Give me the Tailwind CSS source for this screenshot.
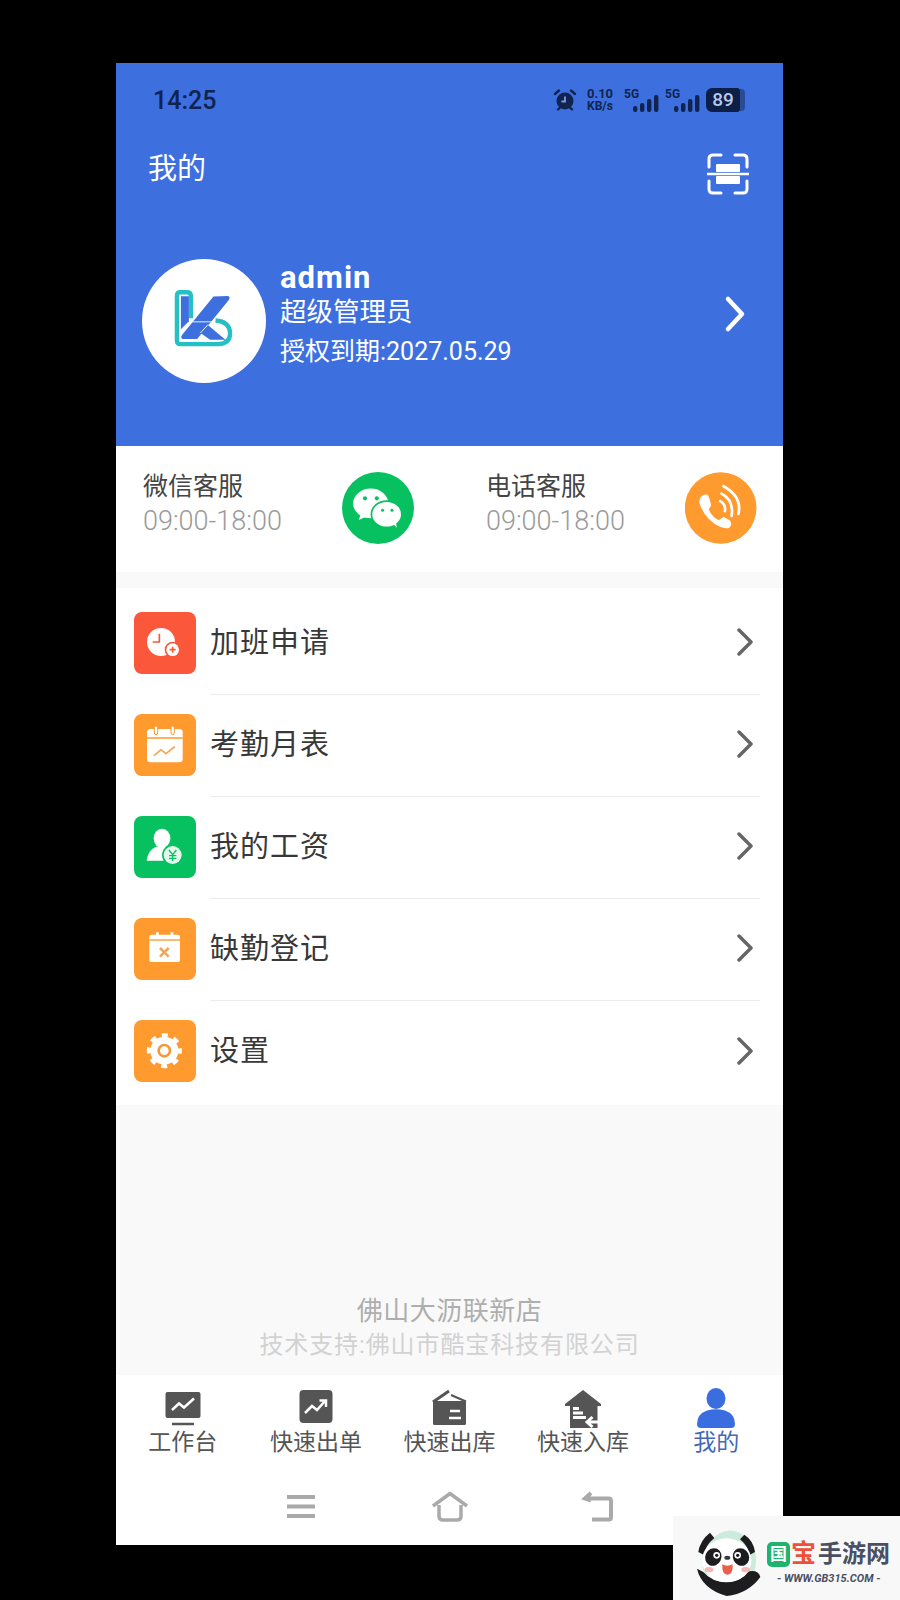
<!DOCTYPE html>
<html lang="zh-CN">
<head>
  <meta charset="UTF-8">
  <meta name="viewport" content="width=device-width, initial-scale=1.0">
  <title>我的</title>
  <script src="https://cdn.jsdelivr.net/npm/@tailwindcss/browser@4"></script>
</head>
<body class="bg-black">
  <div class="relative w-[900px] h-[1600px] overflow-hidden bg-black pt-[63px] pl-[116px] font-['Roboto','Noto_Sans_CJK_SC',sans-serif]">
    <div class="w-[667px] h-[1482px] flex flex-col bg-[#f9f9f9]">

      <!-- blue header -->
      <section class="h-[383px] bg-[#3d6fdf] shrink-0">
        <div class="h-[74px] pl-[37px] pr-[38px] flex items-center justify-between text-[#10244f]">
          <span class="text-[25px] font-medium pt-[1px]">14:25</span>
          <div class="flex items-center">
            <svg class="w-[24px] h-[24px] mr-[9px]" viewBox="0 0 24 24">
              <circle cx="12" cy="13" r="8.5" fill="#10244f"/>
              <path d="M2 6 L6 2.5 M22 6 L18 2.5 M5 21.5 L7 19.5 M19 21.5 L17 19.5" stroke="#10244f" stroke-width="2.4" stroke-linecap="round"/>
              <path d="M12 8.5 V13.5 H8.5" fill="none" stroke="#7f9be0" stroke-width="1.8"/>
            </svg>
            <div class="flex flex-col items-center font-bold text-[12px] leading-[13px] w-[28px]">
              <span class="text-[13px]">0.10</span>
              <span>KB/s</span>
            </div>
            <div class="relative w-[35px] h-[24px] ml-[10px]">
              <span class="absolute left-0 top-0 text-[12px] leading-[12px] font-bold">5G</span>
              <svg class="absolute right-0 bottom-0 w-[26px] h-[17px]" viewBox="0 0 26 17" fill="#10244f">
                <rect x="0" y="11" width="4.4" height="6" rx="2"/><rect x="7" y="8" width="4.4" height="9" rx="2"/><rect x="14" y="4" width="4.4" height="13" rx="2"/><rect x="21" y="0" width="4.4" height="17" rx="2"/>
              </svg>
            </div>
            <div class="relative w-[35px] h-[24px] ml-[6px]">
              <span class="absolute left-0 top-0 text-[12px] leading-[12px] font-bold">5G</span>
              <svg class="absolute right-0 bottom-0 w-[26px] h-[17px]" viewBox="0 0 26 17" fill="#10244f">
                <rect x="0" y="11" width="4.4" height="6" rx="2"/><rect x="7" y="8" width="4.4" height="9" rx="2"/><rect x="14" y="4" width="4.4" height="13" rx="2"/><rect x="21" y="0" width="4.4" height="17" rx="2"/>
              </svg>
            </div>
            <div class="ml-[6px] w-[34px] h-[24px] bg-[#0e1f47] rounded-l-[6px] rounded-r-[3px] flex items-center justify-center text-[#b9c8ec] text-[19px] font-medium">89</div>
            <div class="w-[5px] h-[22px] bg-[#2a4a95] rounded-r-[4px]"></div>
          </div>
        </div>

        <div class="h-[66px] pl-[32px] pr-[34px] flex items-center justify-between">
          <span class="text-[29px] text-white">我的</span>
          <svg class="w-[42px] h-[42px] mt-[7px]" viewBox="0 0 42 42" fill="none" stroke="#fff" stroke-width="3" stroke-linecap="round">
            <path d="M14 2 H6 Q2 2 2 6 V14 M28 2 H36 Q40 2 40 6 V14 M14 40 H6 Q2 40 2 36 V28 M28 40 H36 Q40 40 40 36 V28"/>
            <path d="M0.500 21 H41.500" stroke-width="2.500"/>
            <rect x="9" y="11" width="24" height="8" rx="1" fill="#fff" stroke="none"/>
            <rect x="9" y="23" width="24" height="8" rx="1" fill="#fff" stroke="none"/>
          </svg>
        </div>

        <div class="mt-[56px] pl-[26px] pr-[37px] flex items-start justify-between">
          <div class="flex">
            <div class="w-[124px] h-[124px] rounded-full bg-white shrink-0">
              <svg class="w-[124px] h-[124px]" viewBox="37 27 373 373">
                <path d="M184 205 V138 Q184 127 172 127 L152 127 Q142 127 142 138 V272 Q142 283 152 283 L268 283 Q302 280 302 250 Q300 215 258 212" fill="none" stroke="#25bfc6" stroke-width="13"/>
                <path d="M154 139 L178 139 L178 214 L154 238 Z" fill="#3d6fdf"/>
                <path d="M252 140 L296 138 Q304 142 298 150 L203 268 L158 268 Q152 262 158 255 Z" fill="#3d6fdf"/>
                <path d="M236 226 L288 270 L242 270 L214 250 Z" fill="#3d6fdf"/>
                <path d="M180 216 H248 M180 216 L152 244 M236 224 L212 250" fill="none" stroke="#dff3f6" stroke-width="3"/>
              </svg>
            </div>
            <div class="ml-[14px] text-white">
              <div class="text-[31px] font-bold leading-[32px] mt-[3px] tracking-[1px]">admin</div>
              <div class="text-[26.500px] leading-[34px] mt-[1px] whitespace-nowrap">超级管理员</div>
              <div class="text-[25px] leading-[34px] mt-[6px] whitespace-nowrap">授权到期:2027.05.29</div>
            </div>
          </div>
          <svg class="w-[22px] h-[38px] mt-[36px]" viewBox="0 0 22 38" fill="none" stroke="#fff" stroke-width="4.500" stroke-linecap="round" stroke-linejoin="round">
            <path d="M4 4 L18 19 L4 34"/>
          </svg>
        </div>
      </section>

      <!-- customer service -->
      <section class="h-[126px] bg-white shrink-0 flex">
        <div class="w-[343px] pl-[27px] flex items-start">
          <div class="w-[199px] pt-[24px]">
            <div class="text-[25px] leading-[34px] text-[#444] whitespace-nowrap">微信客服</div>
            <div class="text-[27px] leading-[34px] text-[#9a9a9a] font-light whitespace-nowrap">09:00-18:00</div>
          </div>
          <svg class="w-[72px] h-[72px] mt-[26px]" viewBox="20 22 213 213">
            <circle cx="126.500" cy="128.500" r="106.500" fill="#07c160"/>
            <ellipse cx="105" cy="115" rx="52" ry="44" fill="#fff"/>
            <path d="M76 145 L70 164 L96 152 Z" fill="#fff"/>
            <ellipse cx="152" cy="147" rx="45" ry="39" fill="#fff" stroke="#07c160" stroke-width="5"/>
            <path d="M168 172 L182 187 L178 160 Z" fill="#fff"/>
            <circle cx="88" cy="100" r="6" fill="#07c160"/><circle cx="123" cy="100" r="6" fill="#07c160"/>
            <circle cx="140" cy="135" r="4.500" fill="#07c160"/><circle cx="168" cy="135" r="4.500" fill="#07c160"/>
          </svg>
        </div>
        <div class="flex-1 pl-[27px] flex items-start">
          <div class="w-[199px] pt-[24px]">
            <div class="text-[25px] leading-[34px] text-[#444] whitespace-nowrap">电话客服</div>
            <div class="text-[27px] leading-[34px] text-[#9a9a9a] font-light whitespace-nowrap">09:00-18:00</div>
          </div>
          <svg class="w-[72px] h-[72px] mt-[26px]" viewBox="20 22 213 213">
            <circle cx="125.500" cy="128.500" r="106" fill="#fe9a2e"/>
            <path d="M70 92 L82 88 Q90 90 92 100 L97 118 Q97 125 90 132 Q100 155 120 165 Q128 158 135 155 L152 165 Q158 172 156 180 L150 188 Q140 190 125 185 Q80 165 63 115 Q60 100 70 92 Z" fill="#fff"/>
            <path d="M124 108 Q142 118 138 138 M128 86 Q165 105 158 152 M134 64 Q190 95 178 146" fill="none" stroke="#fff" stroke-width="8" stroke-linecap="round"/>
          </svg>
        </div>
      </section>

      <!-- menu -->
      <section class="mt-[16px] bg-white shrink-0 pt-[5px] pb-[2px]">
        <div class="flex items-center h-[102px]">
          <div class="pl-[18px] pr-[14px] -mt-[2px]">
            <svg class="w-[62px] h-[62px] block" viewBox="0 0 186 186">
              <rect width="186" height="186" rx="24" fill="#fb583b"/>
              <circle cx="81" cy="90" r="42" fill="#fff"/>
              <path d="M76 65 V90 H56" fill="none" stroke="#fb583b" stroke-width="5"/>
              <circle cx="116" cy="113" r="24" fill="#fb583b"/>
              <circle cx="116" cy="113" r="19" fill="#fff"/>
              <path d="M107 113 H125 M116 104 V122" stroke="#fb583b" stroke-width="5"/>
            </svg>
          </div>
          <div class="flex-1 h-full flex items-center justify-between border-b border-[#ececec] mr-[23px]">
            <span class="text-[29px] text-[#383838] tracking-[1px]">加班申请</span>
            <svg class="w-[16px] h-[28px] mr-[7px] -mb-[0px] -mt-[3px]" viewBox="0 0 16 28" fill="none" stroke="#666" stroke-width="3.500" stroke-linecap="round" stroke-linejoin="round"><path d="M2 2 L14 14 L2 26"/></svg>
          </div>
        </div>
        <div class="flex items-center h-[102px]">
          <div class="pl-[18px] pr-[14px] -mt-[2px]">
            <svg class="w-[62px] h-[62px] block" viewBox="0 0 186 186">
              <rect width="186" height="186" rx="24" fill="#fe9a2e"/>
              <rect x="39" y="45" width="107" height="100" rx="10" fill="#fff"/>
              <path d="M39 72 H146" stroke="#fe9a2e" stroke-width="4"/>
              <rect x="61" y="36" width="10" height="26" rx="5" fill="#fff" stroke="#fe9a2e" stroke-width="3"/>
              <rect x="111" y="36" width="10" height="26" rx="5" fill="#fff" stroke="#fe9a2e" stroke-width="3"/>
              <path d="M61 124 L81 107 L96 119 L121 99" fill="none" stroke="#f0a85c" stroke-width="5" stroke-linecap="round" stroke-linejoin="round"/>
            </svg>
          </div>
          <div class="flex-1 h-full flex items-center justify-between border-b border-[#ececec] mr-[23px]">
            <span class="text-[29px] text-[#383838] tracking-[1px]">考勤月表</span>
            <svg class="w-[16px] h-[28px] mr-[7px] -mt-[3px]" viewBox="0 0 16 28" fill="none" stroke="#666" stroke-width="3.500" stroke-linecap="round" stroke-linejoin="round"><path d="M2 2 L14 14 L2 26"/></svg>
          </div>
        </div>
        <div class="flex items-center h-[102px]">
          <div class="pl-[18px] pr-[14px] -mt-[2px]">
            <svg class="w-[62px] h-[62px] block" viewBox="0 0 186 186">
              <rect width="186" height="186" rx="24" fill="#07c160"/>
              <ellipse cx="84" cy="67" rx="25" ry="29" fill="#fff"/>
              <path d="M38 134 Q42 102 66 92 L102 92 Q128 102 134 134 Z" fill="#fff"/>
              <circle cx="116" cy="117" r="32" fill="#07c160"/>
              <circle cx="116" cy="117" r="27" fill="#e6f8ee"/>
              <path d="M105 102 L116 116 L127 102 M116 116 V135 M105 119 H127 M105 127 H127" fill="none" stroke="#07c160" stroke-width="4"/>
            </svg>
          </div>
          <div class="flex-1 h-full flex items-center justify-between border-b border-[#ececec] mr-[23px]">
            <span class="text-[29px] text-[#383838] tracking-[1px]">我的工资</span>
            <svg class="w-[16px] h-[28px] mr-[7px] -mt-[3px]" viewBox="0 0 16 28" fill="none" stroke="#666" stroke-width="3.500" stroke-linecap="round" stroke-linejoin="round"><path d="M2 2 L14 14 L2 26"/></svg>
          </div>
        </div>
        <div class="flex items-center h-[102px]">
          <div class="pl-[18px] pr-[14px] -mt-[2px]">
            <svg class="w-[62px] h-[62px] block" viewBox="0 0 186 186">
              <rect width="186" height="186" rx="24" fill="#fe9a2e"/>
              <rect x="46" y="50" width="92" height="82" rx="6" fill="#fff"/>
              <path d="M46 66 H138" stroke="#fe9a2e" stroke-width="4"/>
              <path d="M70 43 V58 M114 43 V58" stroke="#fff" stroke-width="8"/>
              <path d="M78 90 L104 116 M104 90 L78 116" stroke="#f0a85c" stroke-width="8"/>
            </svg>
          </div>
          <div class="flex-1 h-full flex items-center justify-between border-b border-[#ececec] mr-[23px]">
            <span class="text-[29px] text-[#383838] tracking-[1px]">缺勤登记</span>
            <svg class="w-[16px] h-[28px] mr-[7px] -mt-[3px]" viewBox="0 0 16 28" fill="none" stroke="#666" stroke-width="3.500" stroke-linecap="round" stroke-linejoin="round"><path d="M2 2 L14 14 L2 26"/></svg>
          </div>
        </div>
        <div class="flex items-center h-[102px]">
          <div class="pl-[18px] pr-[14px] -mt-[2px]">
            <svg class="w-[62px] h-[62px] block" viewBox="0 0 186 186">
              <rect width="186" height="186" rx="24" fill="#fe9a2e"/>
              <circle cx="91" cy="92" r="42" fill="#fff"/>
              <circle cx="91" cy="92" r="46" fill="none" stroke="#fff" stroke-width="13" stroke-dasharray="18 18.130" stroke-dashoffset="9"/>
              <circle cx="91" cy="92" r="17" fill="#fff" stroke="#f59a36" stroke-width="8"/>
            </svg>
          </div>
          <div class="flex-1 h-full flex items-center justify-between mr-[23px]">
            <span class="text-[29px] text-[#383838] tracking-[1px]">设置</span>
            <svg class="w-[16px] h-[28px] mr-[7px] -mt-[3px]" viewBox="0 0 16 28" fill="none" stroke="#666" stroke-width="3.500" stroke-linecap="round" stroke-linejoin="round"><path d="M2 2 L14 14 L2 26"/></svg>
          </div>
        </div>
      </section>

      <!-- company -->
      <div class="flex-1 flex flex-col justify-end items-center pb-[13px]">
        <div class="text-[26px] leading-[34px] text-[#aeaeae] tracking-[0.500px]">佛山大沥联新店</div>
        <div class="text-[24px] leading-[34px] text-[#d2d2d2] tracking-[0.900px]">技术支持:佛山市酷宝科技有限公司</div>
      </div>

      <!-- tab bar -->
      <nav class="h-[100px] bg-white shrink-0 grid grid-cols-5 pt-[13px]">
        <div class="flex flex-col items-center">
          <svg class="w-[40px] h-[40px]" viewBox="0 0 40 40">
            <rect x="2.500" y="4" width="35" height="26" rx="2" fill="#555"/>
            <path d="M9 36 H31" stroke="#555" stroke-width="2.500"/>
            <path d="M9 22 L16 15.500 L21 19.500 L31 10.500" fill="none" stroke="#fff" stroke-width="2.500"/>
          </svg>
          <span class="text-[23px] leading-[28px] mt-[1px] text-[#555]">工作台</span>
        </div>
        <div class="flex flex-col items-center">
          <svg class="w-[40px] h-[40px]" viewBox="0 0 40 40">
            <rect x="3.500" y="2" width="33" height="33" rx="4" fill="#555"/>
            <path d="M9 25 L16 18 L21 22 L29 13 M23.500 12.500 H30 V19" fill="none" stroke="#fff" stroke-width="2.500"/>
          </svg>
          <span class="text-[23px] leading-[28px] mt-[1px] text-[#555]">快速出单</span>
        </div>
        <div class="flex flex-col items-center">
          <svg class="w-[40px] h-[40px]" viewBox="0 0 40 40">
            <rect x="4" y="13" width="33" height="24" rx="1.500" fill="#555"/>
            <path d="M4 14 L20 3" fill="none" stroke="#555" stroke-width="3"/>
            <path d="M22 7 L37 13.500" fill="none" stroke="#555" stroke-width="2"/>
            <path d="M11 13 L20 8 L30 13" fill="none" stroke="#555" stroke-width="0"/>
            <path d="M21 23 H31 M20 30 H32" stroke="#fff" stroke-width="2.500"/>
          </svg>
          <span class="text-[23px] leading-[28px] mt-[1px] text-[#555]">快速出库</span>
        </div>
        <div class="flex flex-col items-center">
          <svg class="w-[40px] h-[40px]" viewBox="0 0 40 40">
            <path d="M2 16 L20 2 L38 16 L38 18 L34.500 18 V40 H7 V18 H2 Z" fill="#555"/>
            <path d="M10 19 H16 V22 H10 Z M10 23.500 H20 V26.500 H10 Z M10 28 H23 V31 H10 Z" fill="#fff"/>
            <path d="M36 34 H24 M29.500 29 L24 34 L29.500 39" fill="none" stroke="#fff" stroke-width="3"/>
          </svg>
          <span class="text-[23px] leading-[28px] mt-[1px] text-[#555]">快速入库</span>
        </div>
        <div class="flex flex-col items-center">
          <svg class="w-[40px] h-[40px]" viewBox="0 0 40 40">
            <ellipse cx="20" cy="10.500" rx="9.500" ry="10.500" fill="#3a6ee0"/>
            <path d="M1 36 Q1 26 11 22.500 Q20 20 29 22.500 Q39 26 39 36 Q39 40 35 40 H5 Q1 40 1 36 Z" fill="#3a6ee0"/>
          </svg>
          <span class="text-[23px] leading-[28px] mt-[1px] text-[#4468b8]">我的</span>
        </div>
      </nav>

      <!-- system nav -->
      <div class="h-[70px] bg-white shrink-0 flex justify-center items-start pt-[16px]">
        <div class="w-[148px] flex justify-center">
          <svg class="w-[40px] h-[32px] -ml-[2px]" viewBox="0 0 40 32" stroke="#aaa" stroke-width="4"><path d="M6 6 H34 M6 15.500 H34 M6 25 H34"/></svg>
        </div>
        <div class="w-[148px] flex justify-center">
          <svg class="w-[40px] h-[32px]" viewBox="0 0 40 32" fill="none" stroke="#aaa" stroke-width="3.500" stroke-linejoin="round"><path d="M3 15 L20 2.500 L37 15 M9 14 V25 Q9 29 13 29 H27 Q31 29 31 25 V14"/></svg>
        </div>
        <div class="w-[148px] flex justify-center">
          <svg class="w-[40px] h-[32px]" viewBox="0 0 40 32" fill="none" stroke="#aaa" stroke-width="4"><path d="M13 2 L7 7.500 L13 9.500 M7.500 7.500 H31 Q33 7.500 33 10 V26 Q33 28.500 31 28.500 H14"/></svg>
        </div>
      </div>
    </div>

    <!-- watermark overlaps the corner of the shot -->
    <div class="absolute right-0 bottom-0 w-[227px] h-[84px] bg-[#f8f8f8] flex items-start pl-[12px] pt-[6px]">
      <svg class="w-[85px] h-[78px] shrink-0" viewBox="0 0 255 234">
        <path d="M65 70 Q125 -10 195 55 Q225 100 205 160 L60 160 Q40 110 65 70 Z" fill="#cdebdc"/>
        <path d="M40 90 Q45 55 75 32 L88 48 Q60 70 58 100 Z" fill="#1d1d1f"/>
        <path d="M210 90 Q205 55 178 38 L165 52 Q190 72 192 100 Z" fill="#1d1d1f"/>
        <path d="M36 140 Q50 200 125 222 Q190 215 226 165 Q220 143 192 148 Q170 178 125 180 Q80 180 55 150 Z" fill="#1d1d1f"/>
        <ellipse cx="125" cy="115" rx="74" ry="66" fill="#fff"/>
        <ellipse cx="85" cy="105" rx="24" ry="27" fill="#1d1d1f" transform="rotate(25 85 105)"/>
        <ellipse cx="168" cy="105" rx="24" ry="27" fill="#1d1d1f" transform="rotate(-25 168 105)"/>
        <circle cx="95" cy="100" r="10" fill="#fff"/><circle cx="158" cy="100" r="10" fill="#fff"/>
        <circle cx="95" cy="100" r="5" fill="#1d1d1f"/><circle cx="158" cy="100" r="5" fill="#1d1d1f"/>
        <ellipse cx="127" cy="107" rx="9" ry="6" fill="#3a3a3c"/>
        <path d="M112 127 Q127 135 143 127 Q145 158 127 158 Q110 158 112 127 Z" fill="#e9604f"/>
        <ellipse cx="72" cy="143" rx="13" ry="8" fill="#f7b8b4"/>
        <ellipse cx="182" cy="143" rx="13" ry="8" fill="#f7b8b4"/>
      </svg>
      <div class="-ml-[3px] mt-[19px] w-[130px]">
        <div class="flex items-center h-[26px]">
          <span class="w-[23px] h-[25px] rounded-[5px] bg-[#1fb36d] text-white text-[17px] leading-[25px] text-center font-bold">国</span>
          <span class="ml-[1px] text-[25px] leading-[26px] font-bold text-[#f0503a]">宝</span>
          <span class="ml-[2px] text-[24px] leading-[26px] font-bold text-[#4a4f63] whitespace-nowrap">手游网</span>
        </div>
        <div class="mt-[6px] ml-[10px] text-[11px] leading-[12px] font-bold italic text-[#4a4f63] whitespace-nowrap">- WWW.GB315.COM -</div>
      </div>
    </div>
  </div>
</body>
</html>
